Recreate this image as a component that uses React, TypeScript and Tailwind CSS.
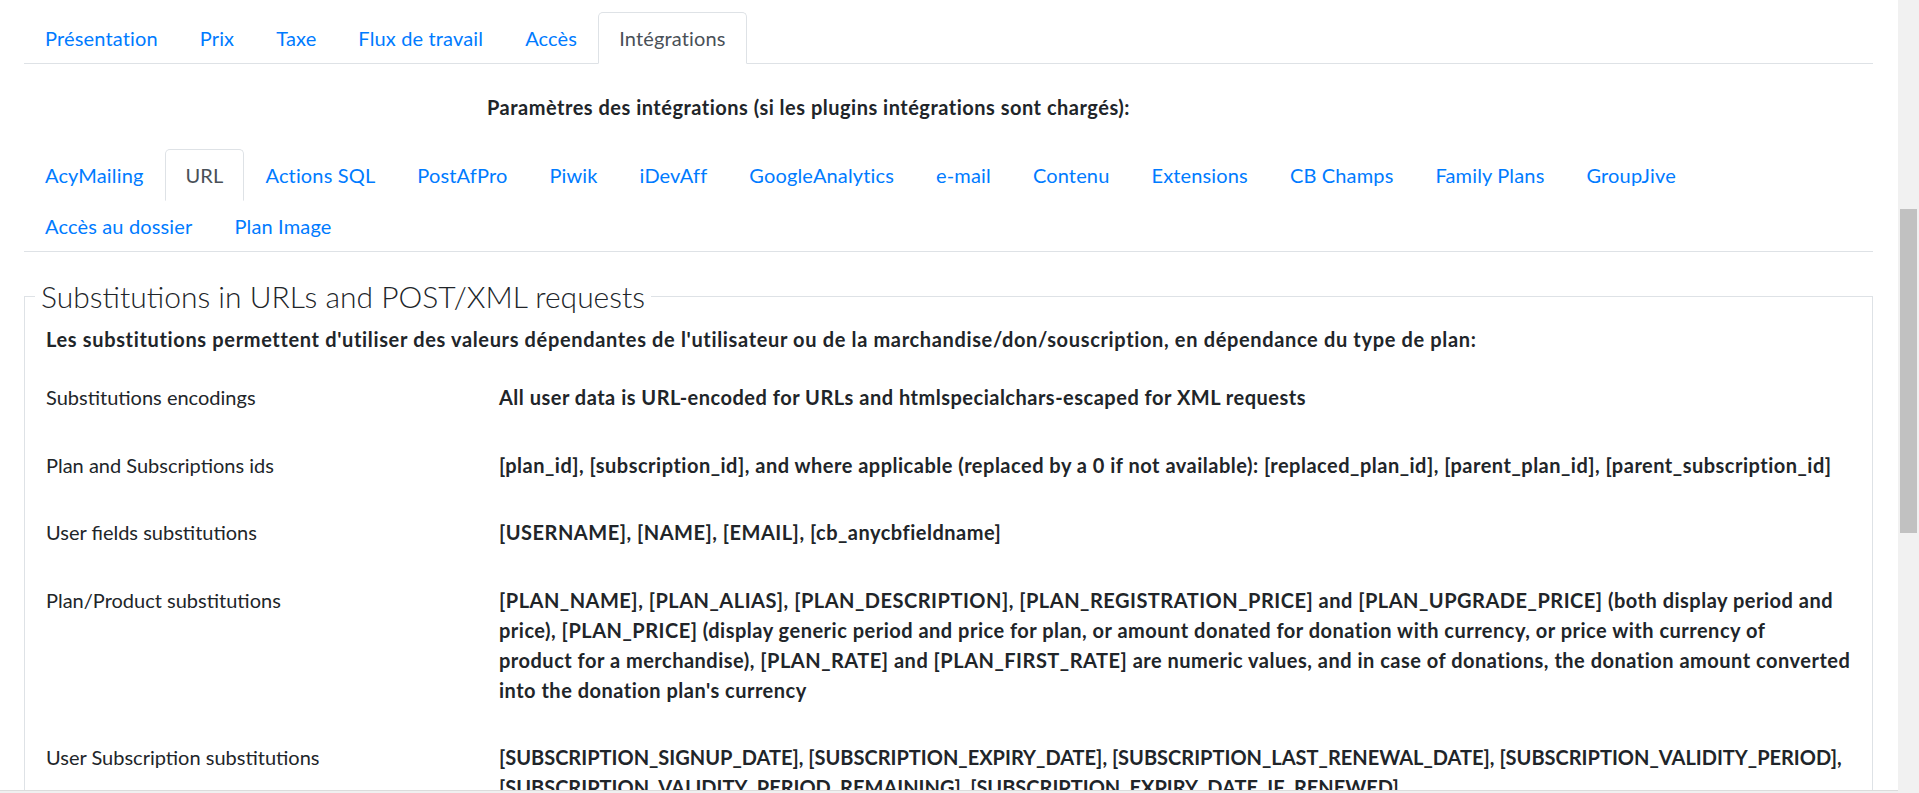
import React from 'react';

const mainTabs = ['Présentation', 'Prix', 'Taxe', 'Flux de travail', 'Accès', 'Intégrations'];

const subTabs = [
  'AcyMailing',
  'URL',
  'Actions SQL',
  'PostAfPro',
  'Piwik',
  'iDevAff',
  'GoogleAnalytics',
  'e-mail',
  'Contenu',
  'Extensions',
  'CB Champs',
  'Family Plans',
  'GroupJive',
  'Accès au dossier',
  'Plan Image'
];

// caps-heavy values already run as wide as the original, so they keep normal tracking
const rows: Array<{ label: string; lines: string[]; caps?: boolean }> = [
  {
    label: 'Substitutions encodings',
    lines: ['All user data is URL-encoded for URLs and htmlspecialchars-escaped for XML requests']
  },
  {
    label: 'Plan and Subscriptions ids',
    lines: [
      '[plan_id], [subscription_id], and where applicable (replaced by a 0 if not available): [replaced_plan_id], [parent_plan_id], [parent_subscription_id]'
    ]
  },
  {
    label: 'User fields substitutions',
    lines: ['[USERNAME], [NAME], [EMAIL], [cb_anycbfieldname]']
  },
  {
    label: 'Plan/Product substitutions',
    lines: [
      '[PLAN_NAME], [PLAN_ALIAS], [PLAN_DESCRIPTION], [PLAN_REGISTRATION_PRICE] and [PLAN_UPGRADE_PRICE] (both display period and',
      'price), [PLAN_PRICE] (display generic period and price for plan, or amount donated for donation with currency, or price with currency of',
      'product for a merchandise), [PLAN_RATE] and [PLAN_FIRST_RATE] are numeric values, and in case of donations, the donation amount converted',
      "into the donation plan's currency"
    ]
  },
  {
    label: 'User Subscription substitutions',
    caps: true,
    lines: [
      '[SUBSCRIPTION_SIGNUP_DATE], [SUBSCRIPTION_EXPIRY_DATE], [SUBSCRIPTION_LAST_RENEWAL_DATE], [SUBSCRIPTION_VALIDITY_PERIOD],',
      '[SUBSCRIPTION_VALIDITY_PERIOD_REMAINING], [SUBSCRIPTION_EXPIRY_DATE_IF_RENEWED]'
    ]
  }
];

function Tab({ label, active }: { label: string; active?: boolean }) {
  return (
    <li
      className={`-mb-px rounded-t-[5px] border px-[20px] py-[10px] tracking-[0.15px] ${
        active ? 'border-[#dee2e6] border-b-white bg-white text-[#495057]' : 'border-transparent text-[#007bff]'
      }`}
    >
      {label}
    </li>
  );
}

export default function App() {
  return (
    <div className="flex h-[793px] overflow-hidden bg-white font-['Lato','Noto_Sans',sans-serif] text-[20px] leading-[30px] text-[#212529]">
      <div className="flex min-w-0 flex-1 flex-col">
        <div className="min-h-0 flex-1 overflow-hidden pl-[24px] pr-[25px] pt-[12px]">
          <ul className="flex border-b border-[#dee2e6]">
            {mainTabs.map((t) => (
              <Tab key={t} label={t} active={t === 'Intégrations'} />
            ))}
          </ul>

          <p className="mt-[28px] pl-[463px] font-bold tracking-[0.5px]">
            Paramètres des intégrations (si les plugins intégrations sont chargés):
          </p>

          <ul className="mt-[27px] flex flex-wrap border-b border-[#dee2e6]">
            {subTabs.map((t) => (
              <Tab key={t} label={t} active={t === 'URL'} />
            ))}
          </ul>

          <fieldset className="mt-[22px] border border-[#dee2e6] px-[10px] pb-[20px]">
            <legend className="px-[6px] text-[30px] leading-[45px] font-light">
              Substitutions in URLs and POST/XML requests
            </legend>
            <div className="px-[11px]">
              <p className="mt-[5px] font-bold tracking-[0.65px]">
                Les substitutions permettent d'utiliser des valeurs dépendantes de l'utilisateur ou de la
                marchandise/don/souscription, en dépendance du type de plan:
              </p>
              <div className="mt-[28px] flex flex-col gap-[37.5px]">
                {rows.map((r) => (
                  <div key={r.label} className="grid grid-cols-[453px_1fr]">
                    <div>{r.label}</div>
                    <div className={`font-bold ${r.caps ? '' : 'tracking-[0.5px]'}`}>
                      {r.lines.map((l, i) => (
                        <div key={i} className="whitespace-nowrap">
                          {l}
                        </div>
                      ))}
                    </div>
                  </div>
                ))}
              </div>
            </div>
          </fieldset>
        </div>
        <div className="h-[3px] border-t border-[#dcdcdc] bg-[#f0f0f0]" />
      </div>
      <div className="flex w-[21px] flex-col bg-[#f1f1f1] pt-[209px]">
        <div className="ml-[2px] mr-[2px] h-[324px] bg-[#c1c1c1]" />
      </div>
    </div>
  );
}
